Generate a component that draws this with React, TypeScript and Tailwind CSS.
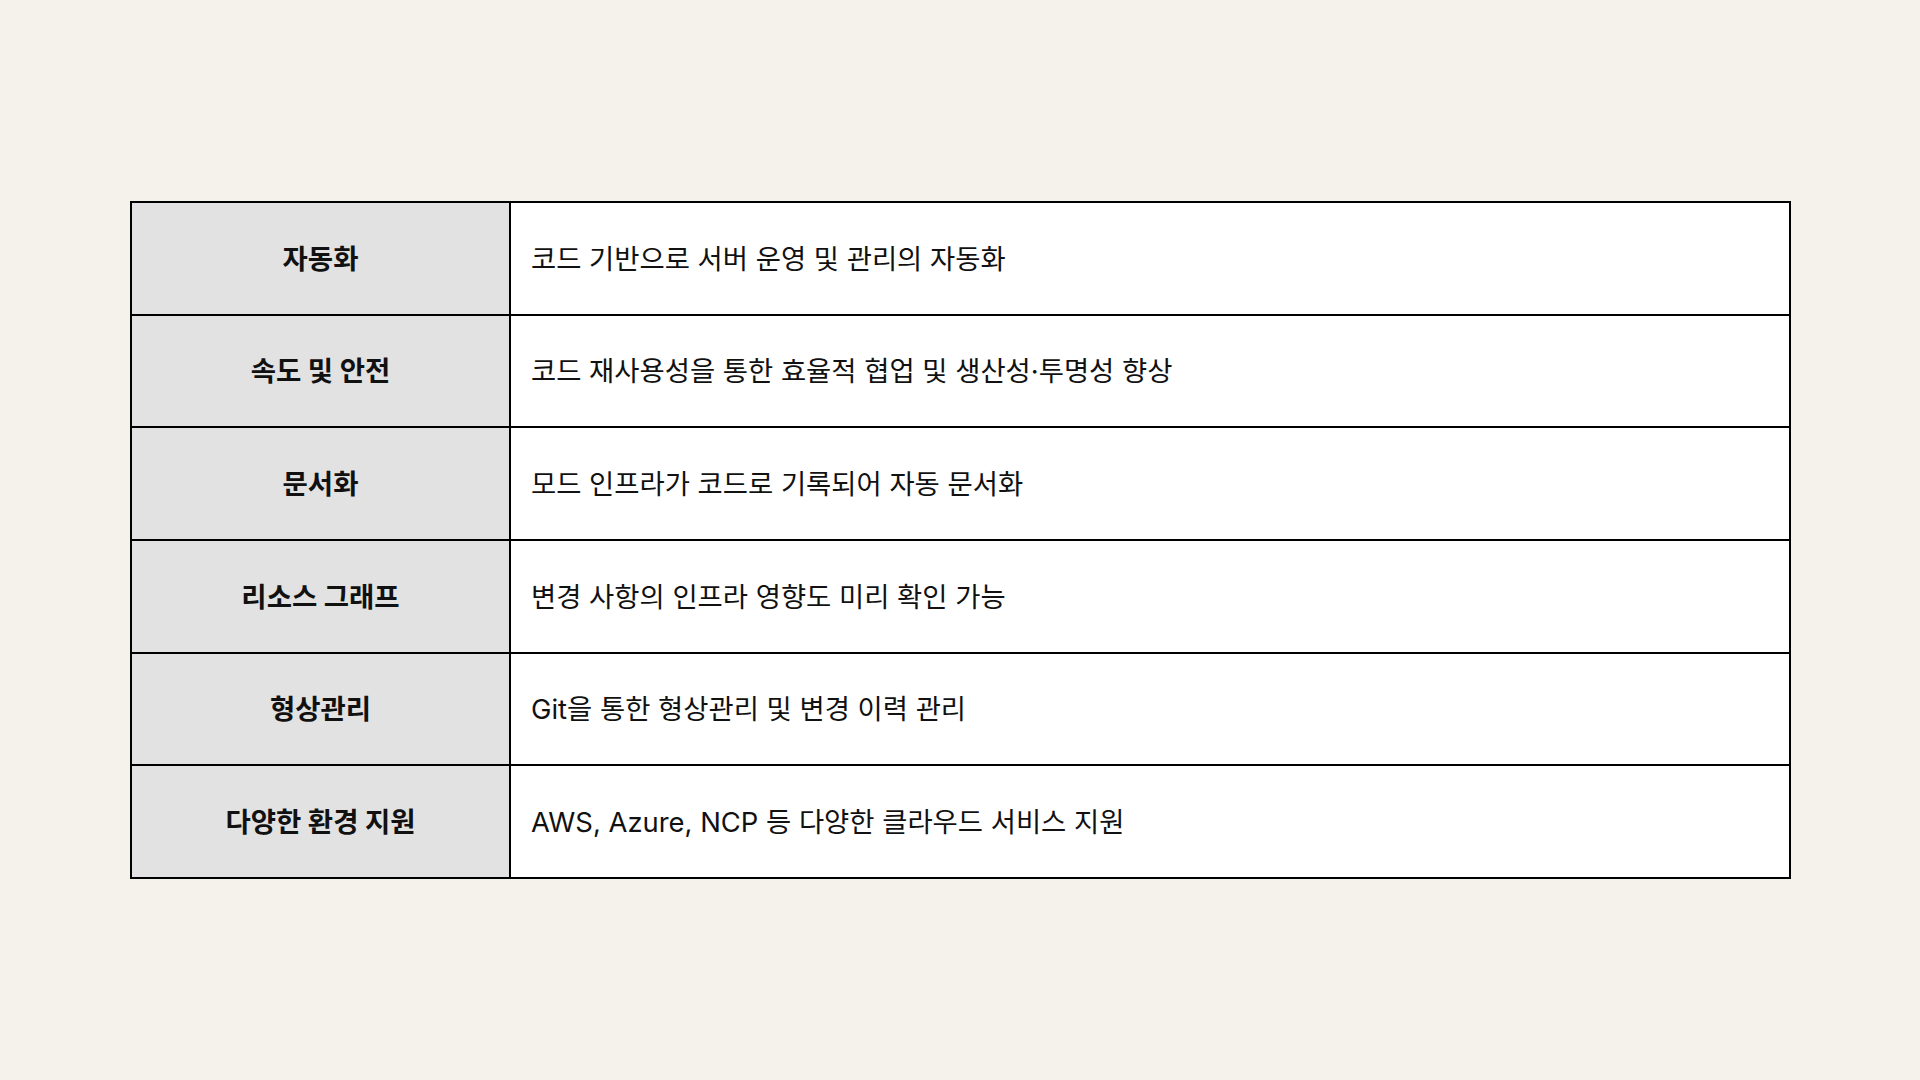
import React from "react";

const rows: [string, string, string][] = [
  ["자동화", "코드 기반으로 서버 운영 및 관리의 자동화", "h-[113px]"],
  ["속도 및 안전", "코드 재사용성을 통한 효율적 협업 및 생산성·투명성 향상", "h-[112px]"],
  ["문서화", "모드 인프라가 코드로 기록되어 자동 문서화", "h-[113px]"],
  ["리소스 그래프", "변경 사항의 인프라 영향도 미리 확인 가능", "h-[113px]"],
  ["형상관리", "Git을 통한 형상관리 및 변경 이력 관리", "h-[112px]"],
  ["다양한 환경 지원", "AWS, Azure, NCP 등 다양한 클라우드 서비스 지원", "h-[113px]"],
];

export default function App() {
  return (
    <div
      className="w-[1920px] h-[1080px] bg-[#f5f2eb] pt-[201px] pl-[130px] text-[#111111]"
      style={{ fontFamily: 'Inter, "Noto Sans CJK KR", "Noto Sans", sans-serif' }}
    >
      <table className="w-[1661px] border-collapse">
        <tbody>
          {rows.map(([k, v, h]) => (
            <tr key={k} className={h}>
              <td className="w-[379px] border-2 border-black bg-[#e2e2e2] text-center text-[27.5px] font-bold pt-[2px]">
                {k}
              </td>
              <td className="border-2 border-black bg-white pl-[20px] text-[27.4px] pt-[2px]">
                {v}
              </td>
            </tr>
          ))}
        </tbody>
      </table>
    </div>
  );
}
